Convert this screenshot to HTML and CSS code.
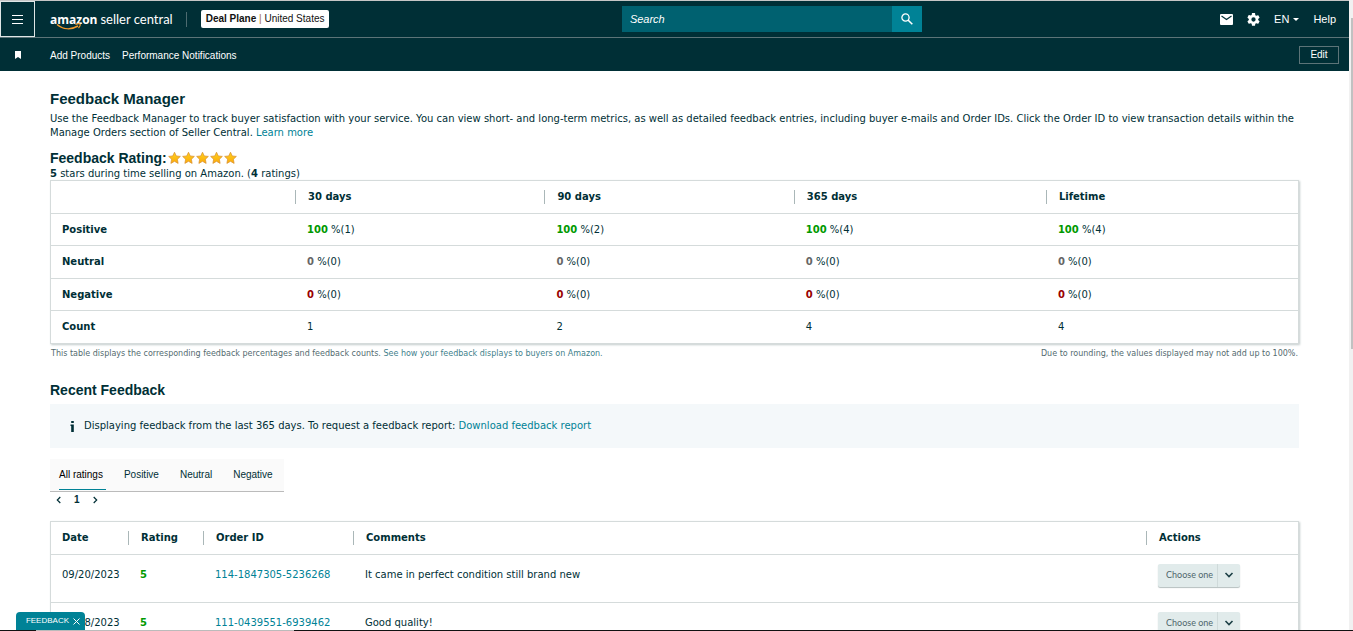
FILE: index.html
```html
<!DOCTYPE html>
<html lang="en">
<head>
    <meta charset="UTF-8">
    <meta name="viewport" content="width=device-width, initial-scale=1.0">
    <title>Feedback Manager</title>
    <link rel="stylesheet" href="styles.css">
</head>
<body>
    <!-- shared shapes -->
    <svg class="sprite" width="0" height="0" aria-hidden="true">
        <linearGradient id="gold" x1="0" y1="0" x2="0" y2="1">
            <stop offset="0" stop-color="#ffd21f"/>
            <stop offset="1" stop-color="#fba90a"/>
        </linearGradient>
        <symbol id="star" viewBox="0 0 14 14">
            <path d="M7 .8l1.9 4 4.4.5-3.2 3 .8 4.5L7 10.6l-3.9 2.2.8-4.5-3.2-3 4.4-.5z" fill="url(#gold)" stroke="#d9902f" stroke-width=".8" stroke-linejoin="round"/>
        </symbol>
        <symbol id="chevron" viewBox="0 0 10 10">
            <path d="M1.5 3L5 6.5 8.500 3" fill="none" stroke="#1d4046" stroke-width="1.600"/>
        </symbol>
    </svg>

    <header class="header">
        <div class="topbar">
            <div class="brand">
                <button class="menu-btn" type="button" aria-label="Menu">
                    <svg width="11" height="9" viewBox="0 0 11 9"><path d="M0 .5h11M0 4.500h11M0 8.500h11" stroke="#fff"/></svg>
                </button>
                <a class="logo" href="#">
                    <span class="logo-amazon">amazon</span>
                    <span class="logo-sub">seller central</span>
                    <svg class="smile" width="26" height="8" viewBox="0 0 26 8"><path d="M1 1.500C7 6.500 15 7 22 3" fill="none" stroke="#f39a2b" stroke-width="1.500"/><path d="M19.500 1.500c2-.8 4-.9 4.500-.4s-.2 2.500-1.500 4" fill="none" stroke="#f39a2b" stroke-width="1.200"/></svg>
                </a>
                <button class="account" type="button"><b>Deal Plane</b> <i>|</i> United States</button>
            </div>
            <form class="search">
                <input type="text" placeholder="Search" aria-label="Search">
                <button type="submit" aria-label="Go">
                    <svg width="12" height="12" viewBox="0 0 12 12"><circle cx="4.500" cy="4.500" r="3.600" fill="none" stroke="#fff" stroke-width="1.300"/><path d="M7 7l4.300 4.300" stroke="#fff" stroke-width="1.600"/></svg>
                </button>
            </form>
            <nav class="tools">
                <a href="#" aria-label="Messages">
                    <svg width="13" height="11" viewBox="0 0 13 11"><rect width="13" height="11" rx="1" fill="#fff"/><path d="M1.500 2l5 3.500 5-3.500" fill="none" stroke="#002f36" stroke-width="1.200"/></svg>
                </a>
                <a href="#" aria-label="Settings">
                    <svg width="13" height="13" viewBox="2 2 20 20"><path fill="#fff" d="M19.140 12.940c.04-.3.060-.61.060-.94s-.02-.64-.07-.94l2.030-1.580a.49.49 0 0 0 .12-.61l-1.920-3.320a.49.49 0 0 0-.59-.22l-2.390.96a7 7 0 0 0-1.620-.94l-.36-2.540A.48.48 0 0 0 13.920 2h-3.840a.48.48 0 0 0-.48.410l-.36 2.540a7 7 0 0 0-1.620.94l-2.390-.96a.49.49 0 0 0-.59.220L2.720 8.870a.48.48 0 0 0 .12.610l2.030 1.580a6 6 0 0 0 0 1.880l-2.030 1.580a.49.49 0 0 0-.12.610l1.920 3.320c.12.220.37.290.59.220l2.390-.96c.5.380 1.030.7 1.620.94l.36 2.540c.05.240.24.410.48.410h3.840c.24 0 .44-.17.470-.41l.36-2.540a7 7 0 0 0 1.620-.94l2.390.96c.22.080.47 0 .59-.22l1.920-3.320a.49.49 0 0 0-.12-.61zM12 15.300a3.300 3.300 0 1 1 0-6.600 3.300 3.300 0 0 1 0 6.600z"/></svg>
                </a>
                <button class="lang" type="button">EN <svg width="6" height="3" viewBox="0 0 6 3"><path d="M0 0h6L3 3z" fill="#fff"/></svg></button>
                <a href="#">Help</a>
            </nav>
        </div>
        <nav class="favorites">
            <svg class="bookmark" width="6" height="8" viewBox="0 0 6 8"><path d="M0 0h6v8L3 6 0 8z" fill="#fff"/></svg>
            <a href="#">Add Products</a>
            <a href="#">Performance Notifications</a>
            <button class="edit" type="button">Edit</button>
        </nav>
    </header>

    <main class="content">
        <h1>Feedback Manager</h1>
        <p class="intro">Use the Feedback Manager to track buyer satisfaction with your service. You can view short- and long-term metrics, as well as detailed feedback entries, including buyer e-mails and Order IDs. Click the Order ID to view transaction details within the Manage Orders section of Seller Central. <a href="#">Learn more</a></p>

        <div class="rating">
            <h2>Feedback Rating:</h2>
            <span class="stars">
                <svg><use href="#star"/></svg>
                <svg><use href="#star"/></svg>
                <svg><use href="#star"/></svg>
                <svg><use href="#star"/></svg>
                <svg><use href="#star"/></svg>
            </span>
        </div>
        <p class="summary"><b>5</b> stars during time selling on Amazon. (<b>4</b> ratings)</p>

        <table class="metrics">
            <thead>
                <tr>
                    <th class="col-label"></th>
                    <th class="col-days"><span>30 days</span></th>
                    <th class="col-days"><span>90 days</span></th>
                    <th><span>365 days</span></th>
                    <th><span>Lifetime</span></th>
                </tr>
            </thead>
            <tbody>
                <tr class="positive">
                    <th>Positive</th>
                    <td><b>100</b> %(1)</td>
                    <td><b>100</b> %(2)</td>
                    <td><b>100</b> %(4)</td>
                    <td><b>100</b> %(4)</td>
                </tr>
                <tr class="neutral">
                    <th>Neutral</th>
                    <td><b>0</b> %(0)</td>
                    <td><b>0</b> %(0)</td>
                    <td><b>0</b> %(0)</td>
                    <td><b>0</b> %(0)</td>
                </tr>
                <tr class="negative">
                    <th>Negative</th>
                    <td><b>0</b> %(0)</td>
                    <td><b>0</b> %(0)</td>
                    <td><b>0</b> %(0)</td>
                    <td><b>0</b> %(0)</td>
                </tr>
                <tr>
                    <th>Count</th>
                    <td>1</td>
                    <td>2</td>
                    <td>4</td>
                    <td>4</td>
                </tr>
            </tbody>
        </table>
        <div class="notes">
            <span>This table displays the corresponding feedback percentages and feedback counts. <a href="#">See how your feedback displays to buyers on Amazon.</a></span>
            <span>Due to rounding, the values displayed may not add up to 100%.</span>
        </div>

        <h2 class="recent-title">Recent Feedback</h2>
        <div class="info">
            <svg width="5" height="11" viewBox="0 0 5 11"><path d="M1.200 0h2.600v2H1.200zM.5 3.500h3.300V11H1.200V5H.5z" fill="#002f36"/></svg>
            <span>Displaying feedback from the last 365 days. To request a feedback report: <a href="#">Download feedback report</a></span>
        </div>

        <div class="tabs">
            <button class="active" type="button">All ratings</button>
            <button type="button">Positive</button>
            <button type="button">Neutral</button>
            <button type="button">Negative</button>
        </div>
        <div class="pager">
            <button type="button" aria-label="Previous"><svg width="5" height="8" viewBox="0 0 5 8"><path d="M4.300 1L1.300 4l3 3" fill="none" stroke="#002f36" stroke-width="1.200"/></svg></button>
            <span>1</span>
            <button type="button" aria-label="Next"><svg width="5" height="8" viewBox="0 0 5 8"><path d="M.7 1l3 3-3 3" fill="none" stroke="#002f36" stroke-width="1.200"/></svg></button>
        </div>

        <table class="entries">
            <thead>
                <tr>
                    <th class="col-date">Date</th>
                    <th class="col-rating"><span>Rating</span></th>
                    <th class="col-order"><span>Order ID</span></th>
                    <th><span>Comments</span></th>
                    <th class="col-actions"><span>Actions</span></th>
                </tr>
            </thead>
            <tbody>
                <tr>
                    <td>09/20/2023</td>
                    <td class="score">5</td>
                    <td><a href="#">114-1847305-5236268</a></td>
                    <td>It came in perfect condition still brand new</td>
                    <td>
                        <label class="choose">
                            <select aria-label="Action"><option>Choose one</option></select>
                            <svg><use href="#chevron"/></svg>
                        </label>
                    </td>
                </tr>
                <tr>
                    <td>09/18/2023</td>
                    <td class="score">5</td>
                    <td><a href="#">111-0439551-6939462</a></td>
                    <td>Good quality!</td>
                    <td>
                        <label class="choose">
                            <select aria-label="Action"><option>Choose one</option></select>
                            <svg><use href="#chevron"/></svg>
                        </label>
                    </td>
                </tr>
            </tbody>
        </table>
    </main>

    <div class="scrollbar"></div>
    <button class="feedback" type="button">FEEDBACK <svg width="7" height="7" viewBox="0 0 7 7"><path d="M.5.5l6 6M6.500.5l-6 6" stroke="#fff"/></svg></button>
    <div class="bottom-line"></div>
</body>
</html>
```
FILE: styles.css
```css
* {
    box-sizing: border-box;
}
body {
    margin: 0;
    height: 100vh;
    overflow: hidden;
    padding-right: 4px;
    background: #fff;
    color: #002f36;
    font: 10px/14px "DejaVu Sans", Verdana, sans-serif;
}
a {
    color: #008296;
    text-decoration: none;
}
button, input, select {
    font: inherit;
    color: inherit;
    border: 0;
    padding: 0;
    margin: 0;
    background: none;
}
svg {
    flex: none;
}
.sprite {
    position: absolute;
}

/* header */
.header {
    background: #002f36;
    border-top: 1px solid #c6c6c6;
    color: #fff;
    font: 11px/14px Arial, "Liberation Sans", sans-serif;
}
.header a {
    color: #fff;
}
.topbar {
    display: flex;
    align-items: center;
    height: 37px;
    border-bottom: 1px solid #5c7478;
}
.brand {
    display: flex;
    align-items: center;
    width: 46.1%;
}
.menu-btn {
    display: flex;
    align-items: center;
    justify-content: center;
    width: 35px;
    height: 36px;
    border: 1px solid #dfe6e6;
}
.logo {
    position: relative;
    display: flex;
    align-items: baseline;
    gap: 3px;
    margin-left: 15px;
    padding-right: 13px;
    border-right: 1px solid #4d6b70;
    font: 12px/15px "Open Sans", sans-serif;
}
.logo-amazon {
    font-weight: 700;
}
.logo-sub {
    font-family: Lato, sans-serif;
    font-size: 13px;
}
.smile {
    position: absolute;
    left: 6px;
    top: 11px;
}
.account {
    height: 18px;
    margin-left: 14px;
    padding: 0 5px;
    border-radius: 2px;
    background: #fff;
    color: #111;
    font-size: 10px;
    white-space: nowrap;
}
.account i {
    color: #a56b2e;
    font-style: normal;
}
.search {
    display: flex;
    width: 300px;
    height: 26px;
}
.search input {
    flex: 1;
    min-width: 0;
    padding: 0 8px;
    background: #006170;
}
.search input::placeholder {
    color: #fff;
    font-style: italic;
    opacity: 1;
}
.search button {
    display: flex;
    align-items: center;
    justify-content: center;
    width: 30px;
    background: #008296;
}
.tools {
    display: flex;
    align-items: center;
    gap: 14px;
    margin-left: auto;
    padding-right: 13px;
}
.tools a, .lang {
    display: flex;
    align-items: center;
}
.lang {
    gap: 4px;
}
.favorites {
    display: flex;
    align-items: center;
    gap: 12px;
    height: 33px;
    padding: 0 10px 0 15px;
    font-size: 10px;
}
.favorites a {
    padding-top: 2px;
}
.bookmark {
    margin-right: 17px;
}
.edit {
    width: 40px;
    height: 18px;
    margin-left: auto;
    border: 1px solid #5c7478;
}

/* page */
.content {
    padding: 19px 50px 0;
}
h1, h2 {
    margin: 0;
    font: bold 15px/18px Arial, "Liberation Sans", sans-serif;
}
h2 {
    font-size: 14px;
}
.intro {
    margin: 4px -20px 9px 0;
}
.rating {
    display: flex;
    align-items: center;
    gap: 1px;
}
.stars {
    display: flex;
    gap: 1px;
}
.stars svg {
    width: 13px;
    height: 14px;
}
.summary {
    margin: 0;
    line-height: 13px;
}
table {
    width: 100%;
    table-layout: fixed;
    border-spacing: 0;
    border: 1px solid #d5dbdb;
    box-shadow: 1px 1px 2px #c4cccc;
}
th, td {
    height: 33px;
    padding: 0 0 0 11px;
    text-align: left;
}
tbody th, tbody td {
    border-top: 1px solid #d5dbdb;
}
thead th {
    height: 32px;
}
thead th span {
    display: block;
    padding-left: 12px;
    border-left: 1px solid #aab7b8;
}
thead th + th {
    padding-left: 0;
}
tbody td + td, .metrics td {
    padding-left: 12px;
}
.col-label {
    width: 244px;
}
.col-days {
    width: 20%;
}
.metrics tbody tr:nth-child(odd) th,
.metrics tbody tr:nth-child(odd) td {
    height: 32px;
}
.positive b, .score {
    color: #090;
}
.score {
    font-weight: bold;
}
.neutral b {
    color: #666;
}
.negative b {
    color: #900;
}
.notes {
    display: flex;
    justify-content: space-between;
    margin-top: 3px;
    padding: 0 1px;
    color: #546b70;
    font-size: 8px;
}
.notes a {
    color: #3f7f8c;
}
.recent-title {
    margin: 20px 0 5px;
}
.info {
    display: flex;
    align-items: center;
    gap: 9px;
    height: 44px;
    padding-left: 20px;
    background: #f4f8fa;
}
.tabs {
    display: flex;
    gap: 21px;
    width: 234px;
    height: 33px;
    margin-top: 11px;
    padding: 0 9px 1px;
    background: #fafafa;
    border-bottom: 1px solid #bbb;
    font: 10px/14px Arial, "Liberation Sans", sans-serif;
}
.tabs button {
    white-space: nowrap;
}
.tabs .active {
    margin-right: -3px;
    padding: 1px 3px 0 0;
    border-bottom: 1px solid #008296;
    color: #000;
}
.pager {
    display: flex;
    align-items: center;
    gap: 13px;
    height: 16px;
    padding-left: 6px;
    font-family: Arial, "Liberation Sans", sans-serif;
    font-weight: bold;
}
.pager button {
    display: flex;
}
.entries {
    margin-top: 13px;
}
.entries td {
    height: 48px;
    padding-bottom: 7px;
}
.col-date {
    width: 77px;
}
.col-rating {
    width: 75px;
}
.col-order {
    width: 150px;
}
.col-actions {
    width: 152px;
}
.choose {
    display: flex;
    width: 82px;
    height: 23px;
    border-radius: 2px;
    background: #e1ebeb;
    box-shadow: 0 1px 1px #b5bfbf;
}
.choose select {
    flex: 1;
    min-width: 0;
    padding-left: 8px;
    appearance: none;
    border-right: 1px solid #cfdada;
    color: #4f666b;
    font: 9px/14px Lato, sans-serif;
}
.choose svg {
    width: 10px;
    height: 10px;
    margin: 6px;
}

/* fixed over the page */
.scrollbar {
    position: fixed;
    top: 0;
    right: 0;
    bottom: 0;
    width: 4px;
    background: linear-gradient(#c1c1c1, #c1c1c1) 2px 18px / 2px 331px no-repeat #f1f1f1;
}
.feedback {
    position: fixed;
    left: 16px;
    bottom: 1px;
    display: flex;
    align-items: center;
    justify-content: flex-end;
    gap: 4px;
    width: 69px;
    height: 18px;
    padding-right: 5px;
    border-radius: 4px 4px 0 0;
    background: #008296;
    color: #fff;
    font: 8px/14px Arial, "Liberation Sans", sans-serif;
}
.bottom-line {
    position: fixed;
    left: 0;
    right: 0;
    bottom: 0;
    height: 1px;
    background: linear-gradient(90deg, #111 36px, #bbb 36px, #bbb 294px, #111 294px);
}
```
